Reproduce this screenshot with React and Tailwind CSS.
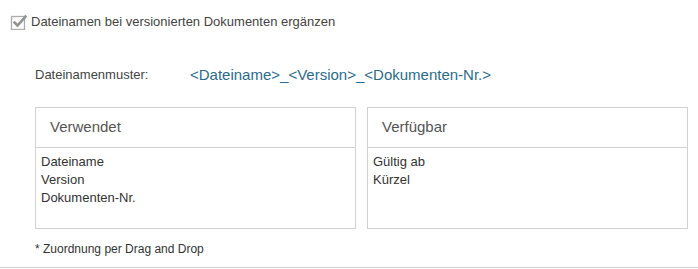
import React from 'react';

const used = ['Dateiname', 'Version', 'Dokumenten-Nr.'];
const available = ['Gültig ab', 'Kürzel'];

function CheckIcon() {
    return (
        <svg width="18" height="16" viewBox="0 0 18 16" className="shrink-0">
            <rect x="1.5" y="2.5" width="13" height="13" fill="none" stroke="#ababab" strokeWidth="1.3" />
            <path d="M4.5 8.5 L7.5 11.5 L15.5 2.5" fill="none" stroke="#939393" strokeWidth="2.6" strokeLinecap="square" />
        </svg>
    );
}

function ListBox({ title, items }) {
    return (
        <div className="border border-[#d2d2d2] bg-white">
            <div className="h-[40px] border-b border-[#d2d2d2] pl-[14px] flex items-center text-[15px] text-[#555]">
                {title}
            </div>
            <ul className="h-[80px] pt-[5px] pl-[5px] text-[13px] leading-[18px] text-[#333]">
                {items.map(item => (
                    <li key={item}>{item}</li>
                ))}
            </ul>
        </div>
    );
}

export default function App() {
    return (
        <div className="w-[698px] h-[269px] bg-white font-['Liberation_Sans',Arial,sans-serif]">
            <div className="h-[268px] border-b border-[#d2d2d2]">
                {/* Checkbox */}
                <div className="pt-[13px] pl-[10px] flex items-center gap-[3px] h-[30px]">
                    <CheckIcon />
                    <span className="text-[13px] leading-[16px] text-[#444]">Dateinamen bei versionierten Dokumenten ergänzen</span>
                </div>

                {/* Muster */}
                <div className="mt-[35px] pl-[35px] flex items-center h-[20px]">
                    <span className="w-[155px] text-[13px] text-[#444]">Dateinamenmuster:</span>
                    <span className="text-[15px] text-[#2b6b8e]">&lt;Dateiname&gt;_&lt;Version&gt;_&lt;Dokumenten-Nr.&gt;</span>
                </div>

                {/* Listen */}
                <div className="mt-[22px] pl-[35px] pr-[10px] grid grid-cols-2 gap-[11px]">
                    <ListBox title="Verwendet" items={used} />
                    <ListBox title="Verfügbar" items={available} />
                </div>

                <p className="mt-[12px] pl-[35px] text-[12px] leading-[16px] text-[#333]">* Zuordnung per Drag and Drop</p>
            </div>
        </div>
    );
}
